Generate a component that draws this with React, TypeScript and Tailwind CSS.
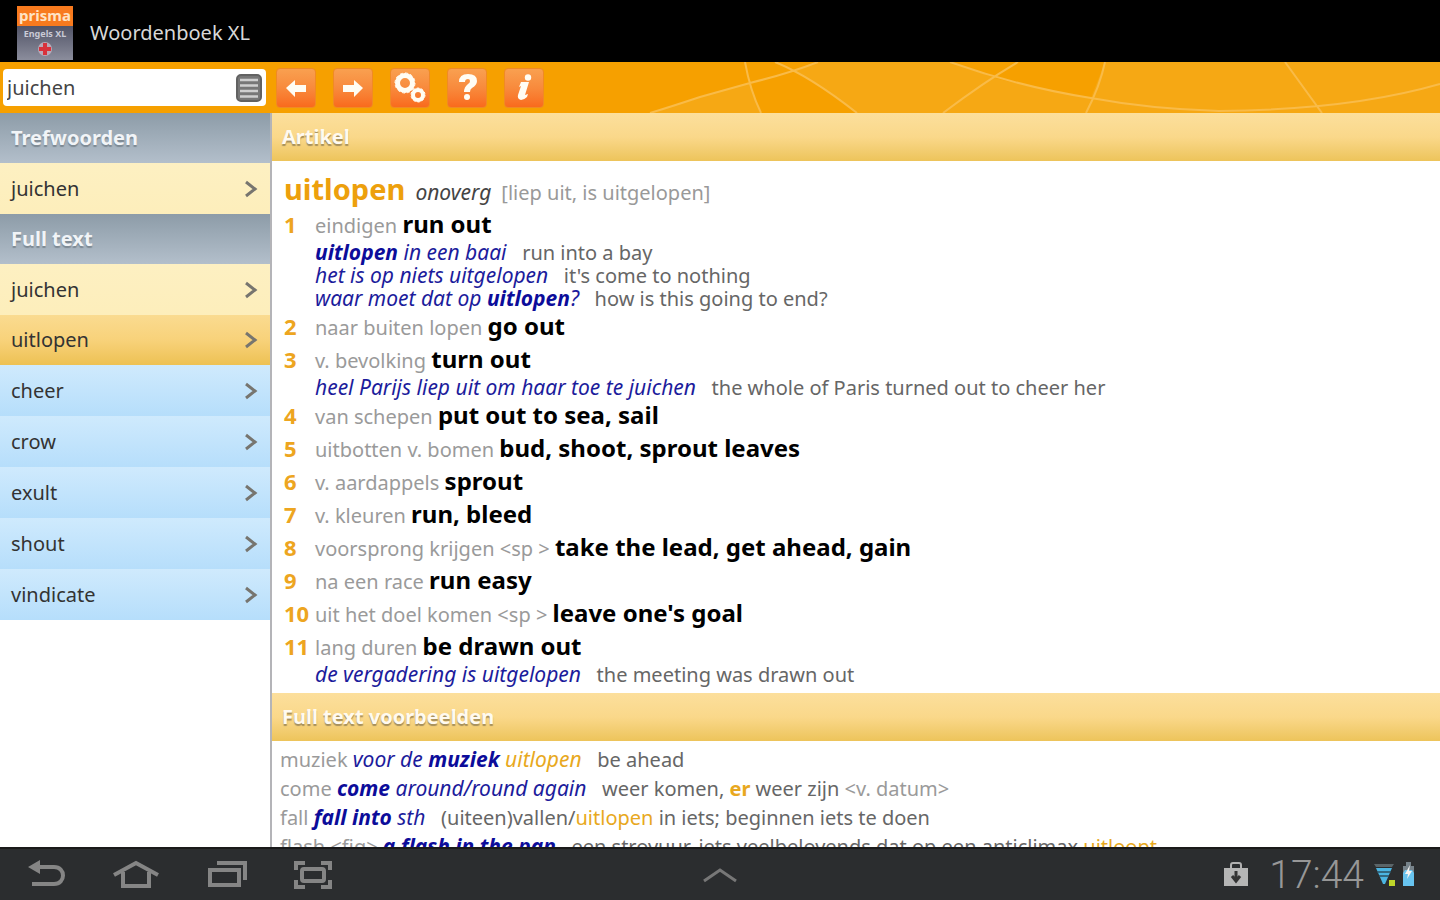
import React, { useState } from 'react';

type Part = {
  text: string;
  style?: 'label' | 'phrase' | 'phraseBold' | 'hit' | 'hitItalic' | 'hitBold' | 'text';
};

type Sense = {
  label: string;
  translation: string;
  examples?: Part[][];
};

const partStyles = {
  label: 'text-[#9a9a9a]',
  phrase: 'text-[21px] leading-none italic text-[#1c1c9c]',
  phraseBold: 'text-[21px] leading-none italic font-bold text-[#0c0c9a]',
  hit: 'text-[#e8a820]',
  hitItalic: 'text-[21px] leading-none italic text-[#e8a820]',
  hitBold: 'font-bold text-[#e8a820]',
  text: 'text-[#666666]',
};

const senses: Sense[] = [
  {
    label: 'eindigen',
    translation: 'run out',
    examples: [
      [{ text: 'uitlopen', style: 'phraseBold' }, { text: ' in een baai', style: 'phrase' }, { text: '   run into a bay' }],
      [{ text: 'het is op niets uitgelopen', style: 'phrase' }, { text: "   it's come to nothing" }],
      [
        { text: 'waar moet dat op ', style: 'phrase' },
        { text: 'uitlopen', style: 'phraseBold' },
        { text: '?', style: 'phrase' },
        { text: '   how is this going to end?' },
      ],
    ],
  },
  { label: 'naar buiten lopen', translation: 'go out' },
  {
    label: 'v. bevolking',
    translation: 'turn out',
    examples: [
      [
        { text: 'heel Parijs liep uit om haar toe te juichen', style: 'phrase' },
        { text: '   the whole of Paris turned out to cheer her' },
      ],
    ],
  },
  { label: 'van schepen', translation: 'put out to sea, sail' },
  { label: 'uitbotten v. bomen', translation: 'bud, shoot, sprout leaves' },
  { label: 'v. aardappels', translation: 'sprout' },
  { label: 'v. kleuren', translation: 'run, bleed' },
  { label: 'voorsprong krijgen <sp >', translation: 'take the lead, get ahead, gain' },
  { label: 'na een race', translation: 'run easy' },
  { label: 'uit het doel komen <sp >', translation: "leave one's goal" },
  {
    label: 'lang duren',
    translation: 'be drawn out',
    examples: [
      [{ text: 'de vergadering is uitgelopen', style: 'phrase' }, { text: '   the meeting was drawn out' }],
    ],
  },
];

const fullTextExamples: Part[][] = [
  [
    { text: 'muziek ', style: 'label' },
    { text: 'voor de ', style: 'phrase' },
    { text: 'muziek ', style: 'phraseBold' },
    { text: 'uitlopen', style: 'hitItalic' },
    { text: '   be ahead' },
  ],
  [
    { text: 'come ', style: 'label' },
    { text: 'come ', style: 'phraseBold' },
    { text: 'around/round again', style: 'phrase' },
    { text: '   weer komen, ' },
    { text: 'er', style: 'hitBold' },
    { text: ' weer zijn ' },
    { text: '<v. datum>', style: 'label' },
  ],
  [
    { text: 'fall ', style: 'label' },
    { text: 'fall into ', style: 'phraseBold' },
    { text: 'sth', style: 'phrase' },
    { text: '   (uiteen)vallen/' },
    { text: 'uitlopen', style: 'hit' },
    { text: ' in iets; beginnen iets te doen' },
  ],
  [
    { text: 'flash <fig> ', style: 'label' },
    { text: 'a flash in the pan', style: 'phraseBold' },
    { text: '   een strovuur, iets veelbelovends dat op een anticlimax ' },
    { text: 'uitloopt', style: 'hit' },
  ],
];

const fullTextWords = [
  { word: 'juichen', lang: 'nl' },
  { word: 'uitlopen', lang: 'nl' },
  { word: 'cheer', lang: 'en' },
  { word: 'crow', lang: 'en' },
  { word: 'exult', lang: 'en' },
  { word: 'shout', lang: 'en' },
  { word: 'vindicate', lang: 'en' },
];

const Line: React.FC<{ parts: Part[] }> = ({ parts }) => (
  <>
    {parts.map((part, index) => (
      <span key={index} className={partStyles[part.style ?? 'text']}>
        {part.text}
      </span>
    ))}
  </>
);

const AppLogo: React.FC = () => (
  <div className="w-14 h-[54px] flex flex-col items-center bg-linear-to-b from-[#34364a] to-[#8b8d9c] overflow-hidden">
    <div className="w-full h-5 bg-[#f87a1e] text-center text-[15px] leading-[18px] font-bold text-[#ffe3c4]">prisma</div>
    <div className="h-4 text-[9px] leading-4 font-bold text-[#c9cad6]">Engels XL</div>
    <svg viewBox="0 0 14 14" className="w-3.5 h-3.5" aria-hidden="true">
      <circle cx="7" cy="7" r="7" fill="#b9a9b8" />
      <path d="M7 1v12M1 7h12" stroke="#d8323c" strokeWidth="4" />
    </svg>
  </div>
);

const ToolButton: React.FC<{ label: string; children: React.ReactNode }> = ({ label, children }) => (
  <button
    aria-label={label}
    className="w-10 h-10 flex items-center justify-center rounded-sm border border-[#f08a24] bg-linear-to-b from-[#f9a050] via-[#f88a3c] to-[#f96a1c]"
  >
    <svg viewBox="0 0 40 40" className="w-10 h-10 shrink-0" fill="#fffdf4" aria-hidden="true">
      {children}
    </svg>
  </button>
);

const WordRow: React.FC<{ word: string; lang: string; selected: boolean; onSelect: () => void }> = ({
  word,
  lang,
  selected,
  onSelect,
}) => {
  let colors = 'h-[51px] from-[#cfeafd] to-[#b6defb]';
  if (lang === 'nl') colors = 'h-[51px] from-[#fdf0c2] to-[#fdeebb]';
  if (selected) colors = 'h-[50px] from-[#fadb90] via-[#f8d27a] to-[#edc152]';

  return (
    <button
      onClick={onSelect}
      className={`w-full pl-[11px] pr-3 flex items-center justify-between text-left text-[#333333] bg-linear-to-b ${colors}`}
    >
      <span>{word}</span>
      <svg viewBox="0 0 14 18" className="w-3.5 h-[18px]" fill="none" stroke="#77756f" strokeWidth="3" aria-hidden="true">
        <path d="M2 2l9 7-9 7" />
      </svg>
    </button>
  );
};

const SideHeader: React.FC<{ title: string }> = ({ title }) => (
  <h2 className="h-[50px] pl-[11px] flex items-center font-bold text-[#f1f4f7] bg-linear-to-b from-[#8d9ca8] to-[#b3bfcb] [text-shadow:0_2px_1px_#7d8993]">
    {title}
  </h2>
);

const MainHeader: React.FC<{ title: string }> = ({ title }) => (
  <h2 className="h-12 pl-2.5 flex items-center font-bold text-[#fffaf0] bg-linear-to-b from-[#fcdf9c] via-[#fad88a] to-[#edc45a] [text-shadow:0_2px_1px_#a58f5c]">
    {title}
  </h2>
);

export default function App() {
  const [query, setQuery] = useState('juichen');
  const [selected, setSelected] = useState('uitlopen');

  return (
    <div className="h-screen flex flex-col bg-white text-xl leading-6 font-['Noto_Sans','Open_Sans',sans-serif] overflow-hidden">
      {/* Title bar */}
      <header className="h-[62px] shrink-0 pl-[17px] pt-1 flex items-center gap-[17px] bg-black">
        <AppLogo />
        <h1 className="text-[#d8d8d8]">Woordenboek XL</h1>
      </header>

      {/* Toolbar */}
      <div className="relative h-[51px] shrink-0 pl-[3px] flex items-center gap-[10px] bg-[#f6a000]">
        <svg
          viewBox="-60 0 800 51"
          preserveAspectRatio="none"
          className="absolute right-0 top-0 w-[800px] h-full"
          fill="none"
          stroke="#f9bb48"
          strokeWidth="2"
          aria-hidden="true"
        >
          <path
            d="M-50 51Q-30 45 0 35L50 21Q54 36 60 51zM94 9Q110 3 118 0H250L295 16Q340 28 391 36L405 0H740V51H157Q125 26 94 9z"
            fill="#f6a814"
            stroke="none"
          />
          <path d="M-50 51Q-30 45 0 35L50 21Q90 11 118 0M45 0Q50 28 61 51M75 0Q110 14 157 51M318 0Q284 20 243 51M250 0Q320 25 391 36Q450 47 519 49Q650 48 740 22M405 0Q400 24 386 51M585 0Q604 26 622 51" />
        </svg>
        <div className="relative w-[263px] h-[37px] pl-1 pr-1 flex items-center rounded bg-white">
          <input
            aria-label="Zoeken"
            value={query}
            onChange={(event) => setQuery(event.target.value)}
            className="min-w-0 flex-1 text-[#444444] outline-none"
          />
          <button aria-label="Woordenlijst">
            <svg viewBox="0 0 26 28" className="w-[26px] h-7" fill="none" aria-hidden="true">
              <rect x="1" y="1" width="24" height="26" rx="4" fill="#777777" stroke="#626262" strokeWidth="2" />
              <path d="M4 6h18M4 11.500h18M4 17h18M4 22.500h18" stroke="#cfcfcf" strokeWidth="2.500" />
            </svg>
          </button>
        </div>
        <div className="relative flex gap-[17px]">
          <ToolButton label="Vorige">
            <path d="M10 20l9-8v5h11v7H19v5z" />
          </ToolButton>
          <ToolButton label="Volgende">
            <path d="M30 20l-9-8v5H10v7h11v5z" />
          </ToolButton>
          <ToolButton label="Instellingen">
            <g fill="none" stroke="#fffdf4">
              <circle cx="15" cy="15" r="7.500" strokeWidth="5" />
              <circle cx="15" cy="15" r="10" strokeWidth="1" strokeDasharray="3 2.200" />
              <circle cx="28" cy="27" r="5" strokeWidth="4" />
              <circle cx="28" cy="27" r="7" strokeWidth="1" strokeDasharray="2.500 2" />
            </g>
          </ToolButton>
          <ToolButton label="Help">
            <path d="M12 14q0-8 9-8 9 0 9 7 0 4-5 7-2 1-2 4h-6q0-5 4-8 2-1 2-3t-2-2q-3 0-3 3z" />
            <circle cx="20" cy="29" r="3" />
          </ToolButton>
          <ToolButton label="Info">
            <circle cx="24" cy="9.500" r="3.200" />
            <path d="M17 14h8l-4 13 3-1-1 3q-3 3-6 3-4-1-3-5l3-9-2 1z" />
          </ToolButton>
        </div>
      </div>

      <div className="flex-1 min-h-0 flex">
        {/* Word list */}
        <nav className="w-[272px] shrink-0 border-r-2 border-[#b4b4b8]">
          <SideHeader title="Trefwoorden" />
          <WordRow word="juichen" lang="nl" selected={selected === 'trefwoord'} onSelect={() => setSelected('trefwoord')} />
          <SideHeader title="Full text" />
          {fullTextWords.map(({ word, lang }) => (
            <WordRow key={word} word={word} lang={lang} selected={selected === word} onSelect={() => setSelected(word)} />
          ))}
        </nav>

        {/* Article */}
        <main className="flex-1 min-w-0 overflow-hidden whitespace-pre">
          <MainHeader title="Artikel" />
          <article className="pl-3 pt-2.5 pb-1">
            <div className="h-10 flex items-baseline gap-2.5">
              <h3 className="text-[29px] leading-9 font-bold text-[#eda00c]">uitlopen</h3>
              <span className="text-[21px] italic text-[#444444]">onoverg</span>
              <span className="text-[#999999]">[liep uit, is uitgelopen]</span>
            </div>
            <ol>
              {senses.map((sense, index) => (
                <li key={sense.translation} className="pb-[3px] flex items-baseline">
                  <span className="w-[31px] shrink-0 text-[22px] leading-none font-bold text-[#eda520]">{index + 1}</span>
                  <div>
                    <p className="leading-[30px]">
                      <span className="text-[#9a9a9a]">{sense.label} </span>
                      <b className="text-2xl leading-none text-black">{sense.translation}</b>
                    </p>
                    {sense.examples?.map((parts, i) => (
                      <p key={i} className="leading-[23px]">
                        <Line parts={parts} />
                      </p>
                    ))}
                  </div>
                </li>
              ))}
            </ol>
          </article>

          <MainHeader title="Full text voorbeelden" />
          <ul className="pl-2 pt-1">
            {fullTextExamples.map((parts, index) => (
              <li key={index} className="leading-[29px]">
                <Line parts={parts} />
              </li>
            ))}
          </ul>
        </main>
      </div>

      {/* System bar */}
      <footer className="h-[53px] shrink-0 px-6 flex items-center justify-between bg-[#2b2d2f] border-t-2 border-[#1a1a1a]">
        <div className="flex-1 flex items-center gap-10">
          <button aria-label="Terug">
            <svg viewBox="0 0 48 32" className="w-12 h-8" fill="none" stroke="#858585" strokeWidth="4" aria-hidden="true">
              <path d="M12 8h18c12 0 12 17 0 17H8" />
              <path d="M4 8l12-7v14z" fill="#858585" stroke="none" />
            </svg>
          </button>
          <button aria-label="Start">
            <svg viewBox="0 0 48 32" className="w-12 h-8" fill="none" stroke="#858585" strokeWidth="4" aria-hidden="true">
              <path d="M2 16L24 4l22 12M11 13v14h26V13" />
            </svg>
          </button>
          <button aria-label="Recente apps">
            <svg viewBox="0 0 48 32" className="w-12 h-8" fill="none" stroke="#858585" strokeWidth="4" aria-hidden="true">
              <path d="M10 11h29v15H10zM17 4h28v17" />
            </svg>
          </button>
          <button aria-label="Schermafbeelding">
            <svg viewBox="0 0 48 32" className="w-12 h-8" fill="none" stroke="#858585" strokeWidth="4" aria-hidden="true">
              <rect x="14" y="10" width="22" height="12" rx="2" />
              <path d="M8 11V4h9M33 4h9v7M8 21v7h9M33 28h9v-7" />
            </svg>
          </button>
        </div>
        <button aria-label="Meer">
          <svg viewBox="0 0 36 16" className="w-9 h-4" fill="none" stroke="#777777" strokeWidth="3" aria-hidden="true">
            <path d="M2 14L18 3l16 11" />
          </svg>
        </button>
        <div className="flex-1 flex items-center justify-end">
          <svg viewBox="0 0 26 26" className="w-[26px] h-[26px]" fill="none" aria-hidden="true">
            <path d="M8 7V3q0-2 2-2h6q2 0 2 2v4" stroke="#b0b0b0" strokeWidth="2" />
            <rect x="1" y="6" width="24" height="18" fill="#b5b5b5" />
            <path d="M13 9v8M9 14l4 5 4-5" stroke="#333333" strokeWidth="3" />
          </svg>
          <time className="pl-5 pr-2.5 text-[39px] leading-[50px] font-light text-[#979797] font-['Roboto',sans-serif]">17:44</time>
          <svg viewBox="0 0 42 28" className="w-[42px] h-7" aria-hidden="true">
            <path d="M0 3h20l-2 3H2z" fill="#5a6468" />
            <path d="M2 7h16l-7 16H9z" fill="#4bb5e2" />
            <path d="M3 11h14M5 15h10" stroke="#2b4f60" strokeWidth="1.500" />
            <rect x="15" y="19" width="6" height="6" fill="#bfd62a" />
            <path d="M32 1h5v4h3v20H29V5h3z" fill="#76828a" />
            <path d="M31 9h7l2 3v13H29V12z" fill="#68c4f0" />
            <path d="M36 4l-5 9h3l-1 5 5-8h-3z" fill="#f4f4f4" />
          </svg>
        </div>
      </footer>
    </div>
  );
}
